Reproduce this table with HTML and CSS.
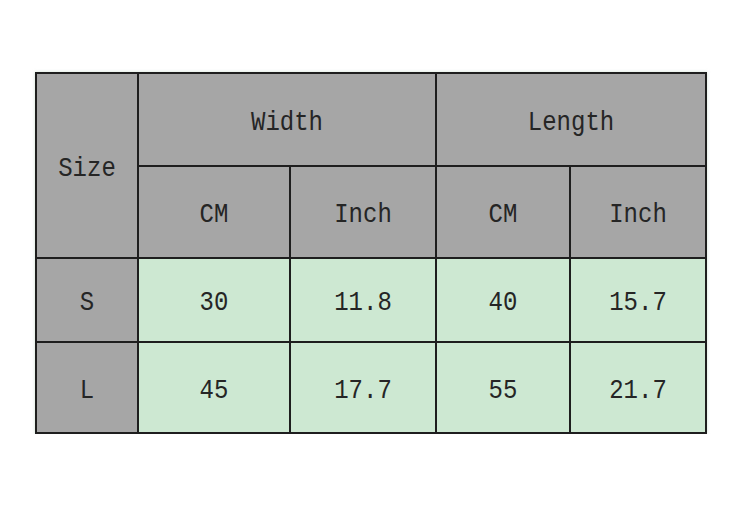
FILE: index.html
```html
<!DOCTYPE html>
<html>
<head>
<meta charset="utf-8">
<link rel="stylesheet" href="styles.css">
</head>
<body>
<div class="page">
  <div class="chart">
    <div class="cell head size"><span>Size</span></div>
    <div class="cell head width"><span>Width</span></div>
    <div class="cell head length"><span>Length</span></div>
    <div class="cell head"><span>CM</span></div>
    <div class="cell head"><span>Inch</span></div>
    <div class="cell head"><span>CM</span></div>
    <div class="cell head"><span>Inch</span></div>
    <div class="cell head"><span>S</span></div>
    <div class="cell data"><span>30</span></div>
    <div class="cell data"><span>11.8</span></div>
    <div class="cell data"><span>40</span></div>
    <div class="cell data"><span>15.7</span></div>
    <div class="cell head"><span>L</span></div>
    <div class="cell data"><span>45</span></div>
    <div class="cell data"><span>17.7</span></div>
    <div class="cell data"><span>55</span></div>
    <div class="cell data"><span>21.7</span></div>
  </div>
</div>
</body>
</html>
```
FILE: styles.css
```css
html, body {
  margin: 0;
  padding: 0;
  background: #ffffff;
}
.page {
  padding: 72px 0 0 35px;
}
.chart {
  display: grid;
  width: fit-content;
  grid-template-columns: 100px 150px 144px 132px 134px;
  grid-template-rows: 91px 90px 82px 89px;
  gap: 2px;
  padding: 2px;
  background: #1e1e1e;
  box-shadow: 0 0 3px rgba(180, 210, 185, 0.6);
}
.cell {
  display: flex;
  align-items: center;
  justify-content: center;
  padding-top: 5px;
  box-sizing: border-box;
  font-family: "Liberation Mono", "DejaVu Sans Mono", monospace;
  font-size: 24px;
  color: #252525;
}
.cell span {
  display: inline-block;
  transform: scaleY(1.12);
}
.head {
  background: #a6a6a6;
}
.data {
  background: #cde8d2;
}
.size {
  grid-row: 1 / 3;
}
.width {
  grid-column: 2 / 4;
}
.length {
  grid-column: 4 / 6;
}
```
